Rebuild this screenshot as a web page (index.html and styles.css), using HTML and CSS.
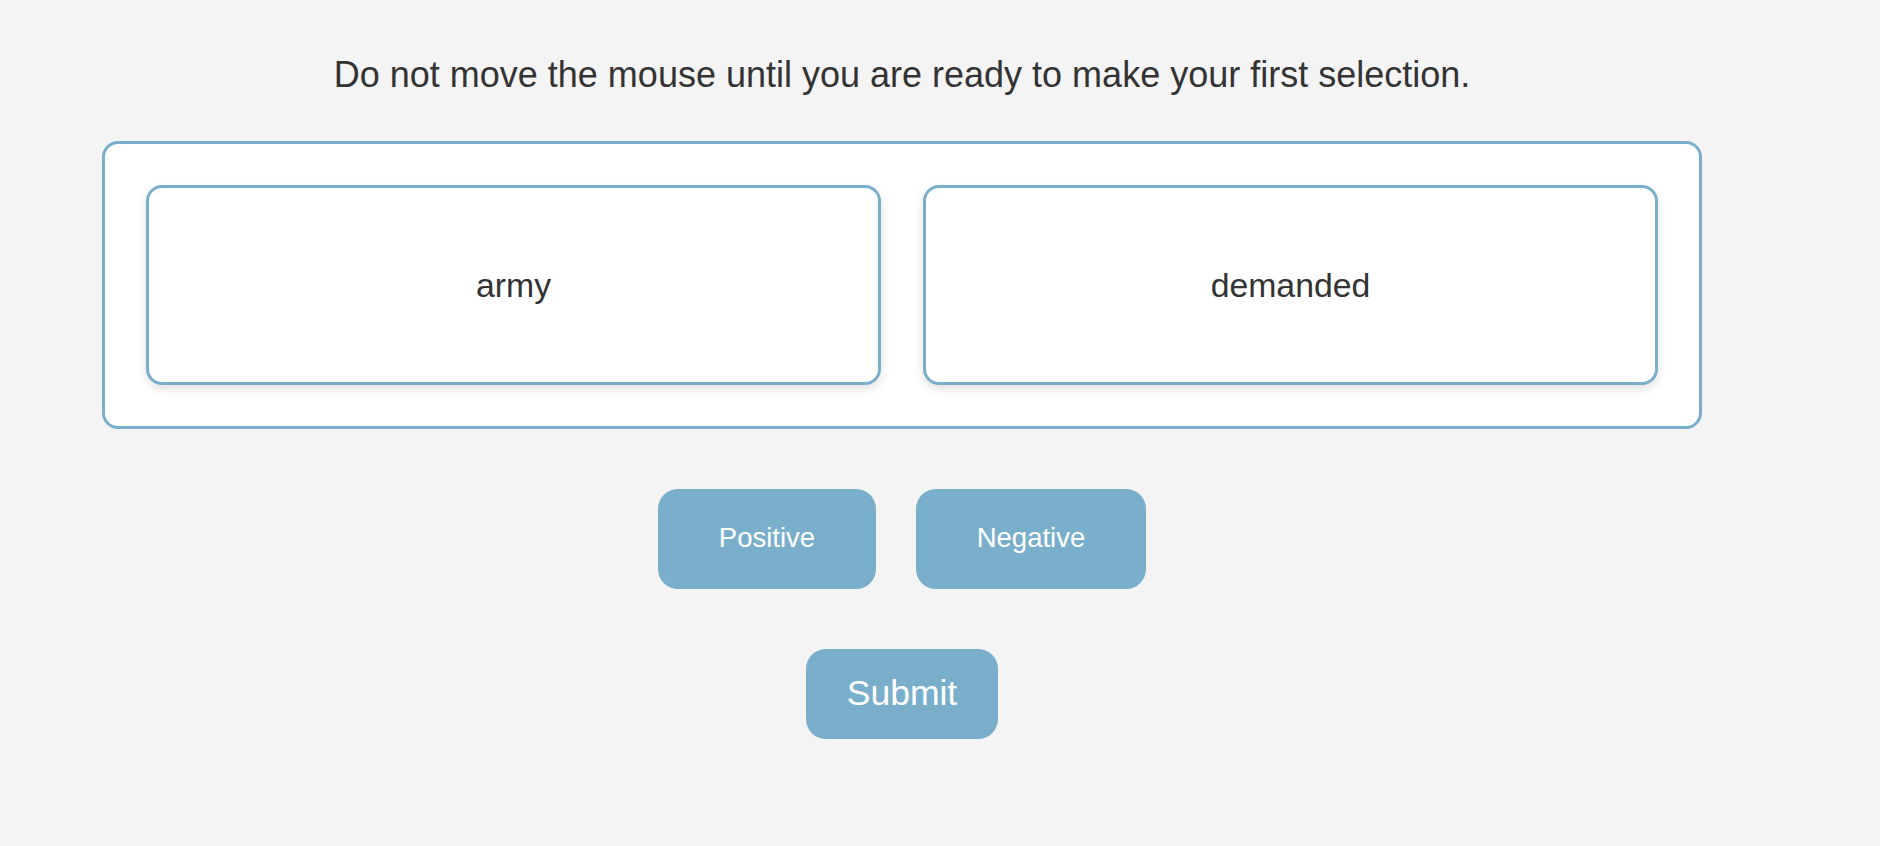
FILE: index.html
```html
<!DOCTYPE html>
<html lang="en">
<head>
<meta charset="utf-8">
<title>Selection task</title>
<link rel="stylesheet" href="styles.css">
</head>
<body>
<main class="page">
  <p class="instruction">Do not move the mouse until you are ready to make your first selection.</p>
  <section class="panel">
    <div class="card">army</div>
    <div class="card">demanded</div>
  </section>
  <div class="choices">
    <button class="choice">Positive</button>
    <button class="choice">Negative</button>
  </div>
  <button class="submit">Submit</button>
</main>
</body>
</html>
```
FILE: styles.css
```css
html, body {
  margin: 0;
  padding: 0;
  background: #f4f4f4;
}
body {
  font-family: "Liberation Sans", Arial, Helvetica, sans-serif;
  color: #333333;
}
.page {
  width: 1804px;
  display: flex;
  flex-direction: column;
  align-items: center;
}
.instruction {
  margin: 54px 0 0;
  font-size: 36px;
  line-height: 41px;
  text-align: center;
}
.panel {
  box-sizing: border-box;
  margin-top: 46px;
  width: 1600px;
  padding: 41px;
  background: #ffffff;
  border: 3px solid #7aafcc;
  border-radius: 16px;
  display: flex;
  gap: 42px;
}
.card {
  box-sizing: border-box;
  flex: 1;
  height: 200px;
  border: 3px solid #7aafcc;
  border-radius: 16px;
  background: #ffffff;
  box-shadow: 0 4px 10px rgba(0, 0, 0, 0.12);
  display: flex;
  align-items: center;
  justify-content: center;
  font-size: 33.8px;
}
.choices {
  margin-top: 60px;
  display: flex;
  gap: 40px;
}
.choice, .submit {
  box-sizing: border-box;
  border: none;
  background: #7aafcc;
  color: #ffffff;
  font-family: "Liberation Sans", Arial, Helvetica, sans-serif;
  border-radius: 20px;
  display: flex;
  align-items: center;
  justify-content: center;
  cursor: pointer;
}
.choice {
  height: 100px;
  padding: 0 0 2px;
  font-size: 27.5px;
}
.choice:first-child {
  width: 218px;
}
.choice:last-child {
  width: 230px;
}
.submit {
  margin-top: 60px;
  height: 90px;
  width: 192px;
  padding: 0 0 2px;
  font-size: 35.5px;
}
```
